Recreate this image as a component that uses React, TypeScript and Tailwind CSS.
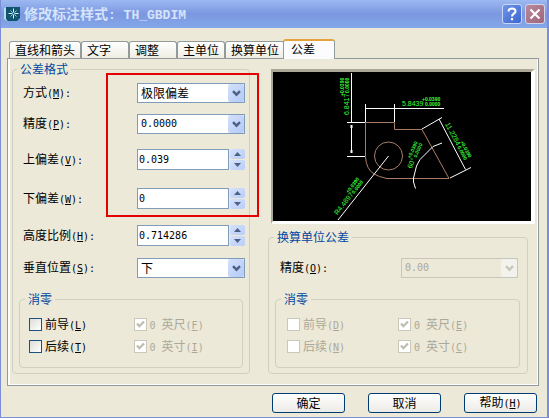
import React, { useState } from 'react';

const latin = 'font-["DejaVu_Sans_Mono",monospace] text-[10px]';

// caption + (hotkey) like the classic win dialogs
function Caption({ text, hotkey, colon }: any) {
  return (
    <>
      {text}
      <span className={latin}>
        (<u>{hotkey}</u>){colon ? ':' : ''}
      </span>
    </>
  );
}

function Chevron() {
  return (
    <svg viewBox="0 0 9 7" className="w-[9px] h-[7px]" fill="none" stroke="currentColor" strokeWidth="2.4">
      <path d="M1 1.2 L4.5 4.7 L8 1.2" />
    </svg>
  );
}

function Row({ id, text, hotkey, children }: any) {
  return (
    <div className="flex items-center justify-between">
      <label htmlFor={id} className="whitespace-nowrap">
        <Caption text={text} hotkey={hotkey} colon />
      </label>
      {children}
    </div>
  );
}

function Combo({ id, options, cjk, disabled }: any) {
  return (
    <div className={`relative h-5 ${disabled ? 'w-[117px]' : 'w-[108px]'}`}>
      <select
        id={id}
        disabled={disabled}
        className={`appearance-none block w-full h-full border pl-[3px] pr-5 opacity-100 outline-none ${
          cjk ? 'text-[12px]' : latin
        } ${disabled ? 'bg-[#ECE9D8] border-[#C9C7BA] text-[#ACA899]' : 'bg-white border-[#7F9DB9] text-black'}`}
      >
        {options.map((o: string) => (
          <option key={o}>{o}</option>
        ))}
      </select>
      <span
        className={`absolute right-px top-px bottom-px w-4 rounded-xs flex items-center justify-center pointer-events-none ${
          disabled ? 'bg-[#F3F2EC] text-[#C9C7BA]' : 'bg-linear-to-br from-[#D5E1FC] to-[#B3C9F8] text-[#4D6185]'
        }`}
      >
        <Chevron />
      </span>
    </div>
  );
}

function Spinner({ id, initial }: any) {
  const [value, setValue] = useState(initial);
  const step = (d: number) => setValue(String(Number(value) + d));
  const arrow = 'flex-1 flex items-center justify-center rounded-xs bg-linear-to-br from-[#D5E1FC] to-[#B9CDF8] text-[#4D6185]';

  return (
    <div className="flex w-[108px] h-[21px]">
      <input
        id={id}
        value={value}
        onChange={(e) => setValue(e.target.value)}
        className={`flex-1 min-w-0 bg-white border border-[#7F9DB9] pl-px outline-none ${latin}`}
      />
      <div className="w-4 pl-px flex flex-col gap-px">
        <button type="button" aria-label="增加" onClick={() => step(1)} className={arrow}>
          <svg viewBox="0 0 7 4" className="w-[7px] h-1" fill="currentColor"><path d="M3.5 0 L7 4 H0 Z" /></svg>
        </button>
        <button type="button" aria-label="减少" onClick={() => step(-1)} className={arrow}>
          <svg viewBox="0 0 7 4" className="w-[7px] h-1" fill="currentColor"><path d="M0 0 H7 L3.5 4 Z" /></svg>
        </button>
      </div>
    </div>
  );
}

function Check({ text, hotkey, zero, checked, disabled }: any) {
  return (
    <label className={`flex items-center gap-[3px] h-[13px] whitespace-nowrap ${disabled ? 'text-[#ACA899]' : ''}`}>
      <span className="relative size-[13px] shrink-0">
        <input
          type="checkbox"
          defaultChecked={checked}
          disabled={disabled}
          className={`peer appearance-none block size-[13px] border ${
            disabled ? 'bg-white border-[#CAC8BB]' : 'bg-linear-to-br from-[#DCDCD7] to-white border-[#1C5180]'
          }`}
        />
        <svg
          viewBox="0 0 13 13"
          className="absolute inset-0 hidden peer-checked:block pointer-events-none"
          fill="none"
          stroke={disabled ? '#BDBBAF' : '#21A121'}
          strokeWidth="2.2"
        >
          <path d="M3 5.6 L5.4 8.2 L10 3.4" />
        </svg>
      </span>
      <span>
        {zero && <span className={`whitespace-pre ${latin}`}>{'0 '}</span>}
        <Caption text={text} hotkey={hotkey} />
      </span>
    </label>
  );
}

function Group({ title, className, legendClass, children }: any) {
  return (
    <fieldset className={`border border-[#D0D0BF] rounded-[4px] min-w-0 ${className}`}>
      <legend className={`px-[3px] leading-[12px] text-[#0046A0] ${legendClass}`}>{title}</legend>
      {children}
    </fieldset>
  );
}

function ZeroGroup({ className, keys, disabled }: any) {
  return (
    <Group title="消零" className={`mt-[15px] pb-[14px] ${className}`} legendClass={disabled ? 'ml-[-6px]' : 'ml-[-4px]'}>
      <div className="pt-[13px] grid grid-cols-2 gap-y-[9px]">
        <Check text="前导" hotkey={keys[0]} disabled={disabled} />
        <Check text="英尺" hotkey={keys[1]} zero checked disabled />
        <Check text="后续" hotkey={keys[2]} disabled={disabled} />
        <Check text="英寸" hotkey={keys[3]} zero checked disabled />
      </div>
    </Group>
  );
}

// dimension value with stacked upper / lower deviation
function DimText({ x, y, angle, value, offset }: any) {
  return (
    <g transform={`translate(${x} ${y}) rotate(${angle})`}>
      <text fontSize="7">{value}</text>
      <text x={offset} y="-5" fontSize="5" fontWeight="bold">+0.0390</text>
      <text x={offset + 3} fontSize="5" fontWeight="bold">0.0000</text>
    </g>
  );
}

function Preview() {
  return (
    <div className="mt-[6px] ml-[3px] h-[155px] border-l-2 border-t-[3px] border-r-[4px] border-b-[3px] border-l-[#ACA899] border-t-[#ACA899] border-r-white border-b-white bg-black overflow-hidden">
      <svg viewBox="0 0 258 149" className="w-full h-full" fill="none">
        <path
          d="M92.5 84.5 V50.5 H121.5 V57.5 H149 L176 106.5 H114 Q106 105 101 102 Q93 97 92.5 84.5"
          stroke="#A87F66"
        />
        <circle cx="115.5" cy="84" r="14" stroke="#A87F66" />
        <g stroke="#fff">
          <path d="M78.5 1 V50 M74 50.5 H92 M78.5 53 V81 M74 84.5 H92" />
          <path d="M78.5 53 V56 M78.5 78 V81" strokeWidth="2" />
          <path d="M92.5 32 V50 M121.5 32 V50 M92.5 36.5 H171" />
          <path d="M115.5 84 L65 148" />
          <path d="M149 57 L169 45.5 M177 106 L198 95.5 M166 47 L192.5 97.5" />
          <path d="M169 71 L160 74.5 L147 87.5 L143.5 94 L140.5 106 V110 L142.5 116.5" />
        </g>
        <g fill="#3CFF3C" className='font-["Liberation_Sans",sans-serif]'>
          <DimText x={76} y={43} angle={-90} value="6.8417" offset={19} />
          <DimText x={129} y={33.5} angle={0} value="5.8439" offset={20} />
          <DimText x={172} y={52} angle={62} value="11.2284" offset={23} />
          <DimText x={64.5} y={143.5} angle={-52} value="R4.4897" offset={24} />
          <DimText x={138.5} y={97} angle={-66} value="60°" offset={9} />
        </g>
      </svg>
    </div>
  );
}

const TABS = ['直线和箭头', '文字', '调整', '主单位', '换算单位', '公差'];

export default function App() {
  const [tab, setTab] = useState('公差');

  return (
    <div className='w-full bg-[#ECE9D8] border-l border-r-2 border-b border-[#7A8FD8] pb-[4px] text-[12px] leading-[14px] text-black select-none font-["Noto_Sans_CJK_SC",sans-serif]'>
      {/* title bar */}
      <header className="h-7 pl-[3px] pr-[2px] flex items-center bg-linear-to-b from-[#9DB9F2] via-[#7B97E0] to-[#84A8EA]">
        <svg viewBox="0 0 16 14" className="w-4 h-[14px]">
          <path d="M0 1 L3 0 V14 L0 12 Z" fill="#B9DDEB" />
          <path d="M2 0 H16 V11 L13 14 H4 L2 12 Z" fill="#12546F" />
          <path d="M9.5 1.5 V11.5 M4.5 6.5 H14.5" stroke="#D8F4FA" />
          <path d="M6.5 3.5 L12.5 9.5 M12.5 3.5 L6.5 9.5" stroke="#8CCBDD" />
          <rect x="8.5" y="5.5" width="2" height="2" fill="#12546F" />
        </svg>
        <h1 className="flex-1 ml-[4px] text-[14px] font-bold text-[#D6E3FA] whitespace-pre">
          修改标注样式<span className='font-["Liberation_Mono",monospace] text-[13px]'>: TH_GBDIM</span>
        </h1>
        <div className="flex gap-[3px]">
          <button type="button" aria-label="帮助" className="size-5 rounded-[3px] border border-[#C9D8F8] bg-linear-to-br from-[#6F93E8] to-[#3D66D0] flex items-center justify-center">
            <svg viewBox="0 0 12 14" className="w-3 h-[14px]" fill="none" stroke="#fff" strokeWidth="2.1">
              <path d="M2.5 4.4 C2.5 0.6 9.5 0.6 9.5 4.2 C9.5 6.6 6 6.6 6 9.4 M6 11 V13.2" />
            </svg>
          </button>
          <button type="button" aria-label="关闭" className="size-5 rounded-[3px] border border-[#D5D3EA] bg-linear-to-br from-[#B88A9C] to-[#A0647A] flex items-center justify-center">
            <svg viewBox="0 0 12 12" className="size-3" stroke="#fff" strokeWidth="2.1">
              <path d="M1.5 1.5 L10.5 10.5 M10.5 1.5 L1.5 10.5" />
            </svg>
          </button>
        </div>
      </header>

      {/* tabs */}
      <div className="mt-[11px] pl-2 h-[19px] flex items-end" role="tablist">
        {TABS.map((t) => (
          <button
            key={t}
            type="button"
            role="tab"
            aria-selected={tab === t}
            onClick={() => setTab(t)}
            className={`border border-b-0 border-[#919B9C] rounded-t-[3px] text-left whitespace-nowrap ${
              tab === t
                ? 'relative z-10 h-5 -mb-px -ml-0.5 min-w-[52px] pl-[7px] pr-[5px] pb-[3px] bg-[#FCFCFE] border-t-2 border-t-[#E5A33C]'
                : 'h-[17px] min-w-12 px-[5px] bg-linear-to-b from-white to-[#EFEDE3]'
            }`}
          >
            {t}
          </button>
        ))}
      </div>

      {/* tab page */}
      <main className="ml-[6px] mr-[8px] border border-[#919B9C] pt-[4px] pb-[11px] pl-[4px] pr-[3px] grid grid-cols-[238fr_267fr] gap-x-[18px] shadow-[inset_2px_0_0_#FCFCFE,inset_-1px_-1px_0_#FCFCFE]">
        <Group title="公差格式" className="pb-[5px]" legendClass="ml-[4px]">
          <div className="relative pt-2 pl-[10px] pr-1">
            <div className="flex flex-col">
              <Row id="method" text="方式" hotkey="M">
                <Combo id="method" cjk options={['极限偏差', '无', '对称', '基本尺寸']} />
              </Row>
              <div className="mt-[11px]">
                <Row id="precision" text="精度" hotkey="P">
                  <Combo id="precision" options={['0.0000', '0.000', '0.00', '0.0', '0']} />
                </Row>
              </div>
              <div className="mt-[15px]">
                <Row id="upper" text="上偏差" hotkey="V">
                  <Spinner id="upper" initial="0.039" />
                </Row>
              </div>
              <div className="mt-[18px]">
                <Row id="lower" text="下偏差" hotkey="W">
                  <Spinner id="lower" initial="0" />
                </Row>
              </div>
            </div>
            {/* red marker round the deviation fields */}
            <div className="absolute -top-[2px] -bottom-2 -right-[10px] w-[153px] border-2 border-[#E60000] pointer-events-none"></div>
          </div>
          <div className="mt-4 pl-[10px] pr-1 flex flex-col gap-3">
            <Row id="height" text="高度比例" hotkey="H">
              <Spinner id="height" initial="0.714286" />
            </Row>
            <Row id="vpos" text="垂直位置" hotkey="S">
              <Combo id="vpos" cjk options={['下', '中', '上']} />
            </Row>
          </div>
          <ZeroGroup className="ml-[6px] mr-[6px] pl-[9px] pr-1" keys={['L', 'F', 'T', 'I']} />
        </Group>

        <div className="flex flex-col">
          <Preview />
          <Group title="换算单位公差" className="mt-[7px] mr-[7px] pb-[5px]" legendClass="ml-[5px]">
            <div className="pt-[15px] pl-[11px] pr-[9px]">
              <Row id="alt" text="精度" hotkey="O">
                <Combo id="alt" disabled options={['0.00']} />
              </Row>
            </div>
            <ZeroGroup className="ml-[6px] mr-[7px] pl-[11px] pr-[10px]" keys={['D', 'E', 'N', 'C']} disabled />
          </Group>
        </div>
      </main>

      {/* footer buttons */}
      <footer className="mt-[7px] pr-[10px] flex justify-end gap-[23px]">
        {['确定', '取消', '帮助'].map((b) => (
          <button
            key={b}
            type="button"
            className="w-[73px] h-5 rounded-[3px] border border-[#003C74] bg-linear-to-b from-white to-[#ECEBE6] flex items-center justify-center"
          >
            <span>{b === '帮助' ? <Caption text={b} hotkey="H" /> : b}</span>
          </button>
        ))}
      </footer>
    </div>
  );
}
